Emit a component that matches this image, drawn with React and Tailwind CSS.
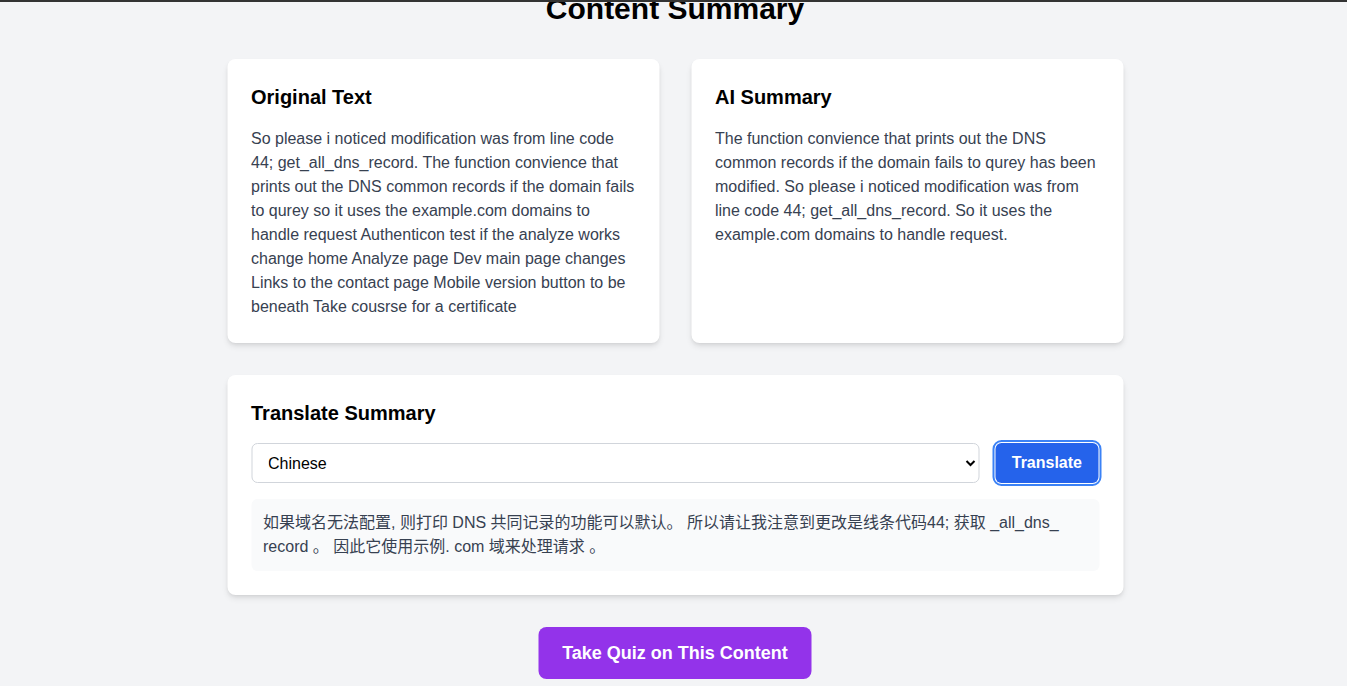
import React, { useState } from 'react';

const originalText =
    'So please i noticed modification was from line code 44; get_all_dns_record. The function convience that prints out the DNS common records if the domain fails to qurey so it uses the example.com domains to handle request Authenticon test if the analyze works change home Analyze page Dev main page changes Links to the contact page Mobile version button to be beneath Take cousrse for a certificate';

const summaryText =
    'The function convience that prints out the DNS common records if the domain fails to qurey has been modified. So please i noticed modification was from line code 44; get_all_dns_record. So it uses the example.com domains to handle request.';

const translatedText =
    '如果域名无法配置, 则打印 DNS 共同记录的功能可以默认。 所以请让我注意到更改是线条代码44; 获取 _all_dns_ record 。 因此它使用示例. com 域来处理请求 。';

const App = () => {
    const [language, setLanguage] = useState('Chinese');

    return (
        <div
            className="min-h-screen bg-[#f3f4f6] overflow-hidden"
            style={{ fontFamily: '"Liberation Sans", Arial, "Noto Sans CJK SC", sans-serif' }}
        >
            <div className="fixed top-0 inset-x-0 h-[2px] bg-[#333333] z-10" />

            <div className="max-w-4xl mx-auto -mt-[9px] translate-x-[1.5px]">
                <h1 className="text-3xl font-bold text-black text-center mb-8">Content Summary</h1>

                <div className="grid grid-cols-2 gap-8 mb-8">
                    <div className="bg-white p-6 rounded-lg shadow-md">
                        <h2 className="text-xl font-semibold text-black mb-4">Original Text</h2>
                        <p className="text-base leading-6 text-[#374151]">{originalText}</p>
                    </div>
                    <div className="bg-white p-6 rounded-lg shadow-md">
                        <h2 className="text-xl font-semibold text-black mb-4">AI Summary</h2>
                        <p className="text-base leading-6 text-[#374151]">{summaryText}</p>
                    </div>
                </div>

                <div className="bg-white p-6 rounded-lg shadow-md mb-8">
                    <h2 className="text-xl font-semibold text-black mb-4">Translate Summary</h2>
                    <div className="flex items-center gap-4 mb-4">
                        <select
                            value={language}
                            onChange={(e) => setLanguage(e.target.value)}
                            className="flex-1 h-10 px-3 border border-[#d1d5db] rounded-md bg-white text-base text-black"
                        >
                            <option>Chinese</option>
                            <option>Spanish</option>
                            <option>French</option>
                        </select>
                        <button className="h-10 px-4 mr-[1px] bg-[#2563eb] text-white font-bold rounded-md outline-2 outline-offset-1 outline-[#3b82f6]">
                            Translate
                        </button>
                    </div>
                    <div className="bg-[#f9fafb] rounded-md p-3">
                        <p className="text-base leading-6 text-[#374151]">{translatedText}</p>
                    </div>
                </div>

                <div className="flex justify-center">
                    <button className="bg-[#9333ea] text-white text-lg font-bold px-6 py-3 rounded-lg">
                        Take Quiz on This Content
                    </button>
                </div>
            </div>
        </div>
    );
};

export default App;
